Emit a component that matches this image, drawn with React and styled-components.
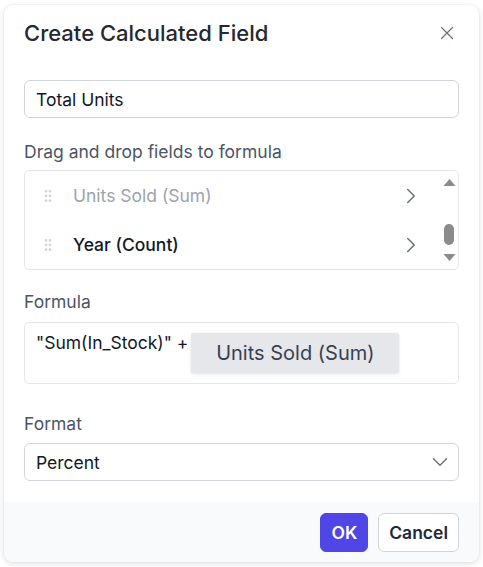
import React from "react";
import styled, { createGlobalStyle } from "styled-components";
import { X, ChevronRight, ChevronDown, GripVertical } from "lucide-react";

const GlobalStyle = createGlobalStyle`
  body {
    margin: 0;
    background: #ffffff;
    font-family: Inter, "Noto Sans", sans-serif;
  }
`;

const Page = styled.div`
  padding: 5px 4px 6px 4px;
`;

const Dialog = styled.div`
  width: 475px;
  background: #ffffff;
  border-radius: 9px;
  box-shadow: 0 0 0 1px rgba(17, 24, 39, 0.03), 0 2px 6px rgba(17, 24, 39, 0.12);
  overflow: hidden;
`;

const Header = styled.div`
  display: flex;
  align-items: center;
  justify-content: space-between;
  padding: 14px 20px 0 20px;
  height: 28px;
`;

const Title = styled.h2`
  margin: 0;
  font-size: 22px;
  font-weight: 500;
  color: #27272f;
`;

const CloseButton = styled.button`
  border: none;
  background: none;
  padding: 0;
  margin-right: 1px;
  display: flex;
  color: #6b7280;
  cursor: pointer;
`;

const Body = styled.div`
  padding: 33px 20px 21px 20px;
  display: flex;
  flex-direction: column;
`;

const Label = styled.div`
  font-size: 17.5px;
  line-height: 24px;
  color: #4b5563;
  margin: ${({ $top }) => $top}px 0 ${({ $bottom }) => $bottom}px 0;
`;

const TextInput = styled.div`
  height: 38px;
  box-sizing: border-box;
  border: 1px solid #d1d5db;
  border-radius: 6px;
  padding: 0 5px 0 11px;
  display: flex;
  align-items: center;
  justify-content: space-between;
  font-size: 17.5px;
  color: #111827;
`;

const FieldList = styled.div`
  height: 100px;
  box-sizing: border-box;
  border: 1px solid #e5e7eb;
  border-radius: 5px;
  display: flex;
`;

const Rows = styled.div`
  flex: 1;
  display: flex;
  flex-direction: column;
`;

const FieldRow = styled.div`
  height: 49px;
  display: flex;
  align-items: center;
  padding: 0 18px 0 15px;
  font-size: 17.5px;
  color: ${({ $muted }) => ($muted ? "#9ca3af" : "#111827")};
  font-weight: ${({ $muted }) => ($muted ? 400 : 500)};
  svg.grip {
    color: #d1d5db;
    margin-right: 17px;
  }
  span {
    flex: 1;
  }
  svg.chev {
    color: #6b7280;
  }
`;

const ScrollTrack = styled.div`
  width: 14px;
  margin-right: 2px;
  display: flex;
  flex-direction: column;
  align-items: center;
  padding-top: 7px;
`;

const Thumb = styled.div`
  width: 10px;
  height: 21px;
  border-radius: 5px;
  background: #8b8b8b;
  margin: 37px 0 8px 0;
`;

const FormulaBox = styled.div`
  height: 62px;
  box-sizing: border-box;
  border: 1px solid #e5e7eb;
  border-radius: 5px;
  padding: 10px 11px;
  display: flex;
  align-items: flex-start;
  font-size: 17.5px;
  color: #111827;
`;

const FormulaText = styled.span`
  line-height: 20px;
  white-space: pre;
`;

const DragChip = styled.div`
  margin-left: 3px;
  width: 208px;
  height: 40px;
  box-sizing: border-box;
  display: flex;
  align-items: center;
  justify-content: center;
  background: #e5e7eb;
  color: #374151;
  font-size: 20px;
  border-radius: 2px;
  box-shadow: 0 1px 3px rgba(0, 0, 0, 0.12);
`;

const Footer = styled.div`
  background: #f9fafb;
  display: flex;
  justify-content: flex-end;
  gap: 10px;
  padding: 11px 20px 10px 20px;
`;

const Button = styled.button`
  height: 39px;
  box-sizing: border-box;
  border-radius: 6px;
  font-family: Inter, "Noto Sans", sans-serif;
  font-size: 17.5px;
  font-weight: 600;
  padding: 0 10px;
  background: ${({ $primary }) => ($primary ? "#4f46e5" : "#ffffff")};
  color: ${({ $primary }) => ($primary ? "#ffffff" : "#1f2937")};
  border: 1px solid ${({ $primary }) => ($primary ? "#4f46e5" : "#d1d5db")};
  cursor: pointer;
`;

const Tri = ({ down }) => (
  <svg width="13" height="9" viewBox="0 0 13 9">
    <path d={down ? "M0.5 1 L12.5 1 L6.5 8 Z" : "M0.5 8 L12.5 8 L6.5 1 Z"} fill="#8b8b8b" />
  </svg>
);

const fields = [
  { name: "Units Sold (Sum)", muted: true },
  { name: "Year (Count)", muted: false },
];

export default function App() {
  return (
    <Page>
      <GlobalStyle />
      <Dialog>
        <Header>
          <Title>Create Calculated Field</Title>
          <CloseButton>
            <X size={22} strokeWidth={1.4} />
          </CloseButton>
        </Header>
        <Body>
          <TextInput>Total Units</TextInput>

          <Label $top={22} $bottom={6}>Drag and drop fields to formula</Label>
          <FieldList>
            <Rows>
              {fields.map((f) => (
                <FieldRow key={f.name} $muted={f.muted}>
                  <GripVertical className="grip" size={16} strokeWidth={2.2} />
                  <span>{f.name}</span>
                  <ChevronRight className="chev" size={26} strokeWidth={1.4} />
                </FieldRow>
              ))}
            </Rows>
            <ScrollTrack>
              <Tri />
              <Thumb />
              <Tri down />
            </ScrollTrack>
          </FieldList>

          <Label $top={20} $bottom={8}>Formula</Label>
          <FormulaBox>
            <FormulaText>"Sum(In_Stock)" +</FormulaText>
            <DragChip>Units Sold (Sum)</DragChip>
          </FormulaBox>

          <Label $top={28} $bottom={7}>Format</Label>
          <TextInput>
            Percent
            <ChevronDown size={26} strokeWidth={1.3} color="#6b7280" />
          </TextInput>
        </Body>
        <Footer>
          <Button $primary>OK</Button>
          <Button>Cancel</Button>
        </Footer>
      </Dialog>
    </Page>
  );
}
